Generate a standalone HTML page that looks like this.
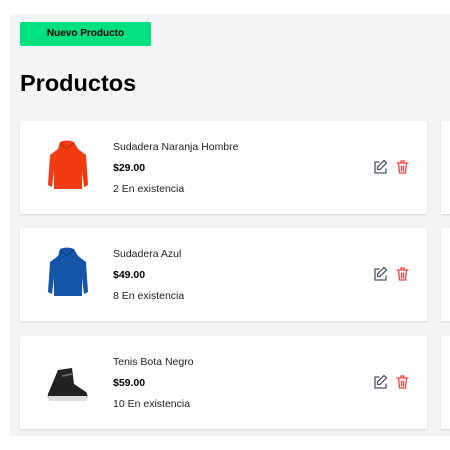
<!DOCTYPE html>
<html><head><style>
body{margin:0;width:450px;height:450px;background:#fff;font-family:"Liberation Sans",sans-serif;position:relative;overflow:hidden}
.bg{position:absolute;left:10px;top:14px;width:440px;height:422px;background:#f3f4f6}
.btn{position:absolute;left:20px;top:22px;width:131px;height:24px;background:#00e07f;border-radius:2px;font-size:10px;font-weight:bold;text-align:center;line-height:24px;color:#000}
h1{position:absolute;left:20px;top:66px;margin:0;font-size:23.5px;font-weight:900;line-height:34px}
.card{position:absolute;left:20px;width:407px;height:93px;background:#fff;box-shadow:0 1px 2px rgba(0,0,0,.12)}
.card2{position:absolute;left:441px;width:20px;height:93px;background:#fff;box-shadow:0 1px 2px rgba(0,0,0,.12)}
.n{position:absolute;left:93px;top:20px;font-size:10.5px;color:#222}
.p{position:absolute;left:93px;top:41px;font-size:10.5px;font-weight:bold}
.s{position:absolute;left:93px;top:62px;font-size:10.5px;color:#222}
.img{position:absolute;left:22px;top:18px}
.ic{position:absolute;left:352px;top:38px}
</style></head><body>
<div class="bg"></div>
<div class="btn">Nuevo Producto</div>
<h1>Productos</h1>

<div class="card" style="top:121px">
<svg class="img" width="50" height="55" viewBox="0 0 50 55"><path d="M18 3 Q25 0 32 3 L36 10 L44 16 L46 46 L42 48 L40 32 L40 50 L12 50 L12 32 L10 48 L6 46 L8 16 L16 10 Z" fill="#f03c10"/><path d="M19 4 Q25 14 31 4" fill="none" stroke="#b82a08"/></svg>
<div class="n">Sudadera Naranja Hombre</div><div class="p">$29.00</div><div class="s">2 En existencia</div>
<svg class="ic" width="40" height="16" viewBox="0 0 40 16"><g fill="none" stroke="#4b5563" stroke-width="1.3" stroke-linecap="round" stroke-linejoin="round"><path d="M7 3H3v11h11v-4"/><path d="M12 1.5l2.5 2.5L8 10.5H5.5V8z"/></g><g fill="none" stroke="#ef4444" stroke-width="1.3" stroke-linecap="round"><path d="M25 4h11M29 4V2h3v2M26.5 4l1 10h6l1-10M29.5 7v5M31.5 7v5"/></g></svg>
</div>
<div class="card2" style="top:121px"></div>

<div class="card" style="top:228px">
<svg class="img" width="50" height="55" viewBox="0 0 50 55"><path d="M18 3 Q25 0 32 3 L36 10 L44 16 L46 46 L42 48 L40 32 L40 50 L12 50 L12 32 L10 48 L6 46 L8 16 L16 10 Z" fill="#1455a8"/><path d="M19 4 Q25 14 31 4" fill="none" stroke="#0c3a78"/></svg>
<div class="n">Sudadera Azul</div><div class="p">$49.00</div><div class="s">8 En existencia</div>
<svg class="ic" width="40" height="16" viewBox="0 0 40 16"><g fill="none" stroke="#4b5563" stroke-width="1.3" stroke-linecap="round" stroke-linejoin="round"><path d="M7 3H3v11h11v-4"/><path d="M12 1.5l2.5 2.5L8 10.5H5.5V8z"/></g><g fill="none" stroke="#ef4444" stroke-width="1.3" stroke-linecap="round"><path d="M25 4h11M29 4V2h3v2M26.5 4l1 10h6l1-10M29.5 7v5M31.5 7v5"/></g></svg>
</div>
<div class="card2" style="top:228px"></div>

<div class="card" style="top:336px">
<svg class="img" width="50" height="55" viewBox="0 0 50 55"><path d="M16 16 L30 14 L32 30 L44 38 Q47 42 44 45 L8 45 Q5 44 6 40 Z" fill="#222"/><path d="M6 42 L45 42 L44 47 L7 47 Z" fill="#ddd"/><path d="M20 22 L30 20" stroke="#666" stroke-width="2"/></svg>
<div class="n">Tenis Bota Negro</div><div class="p">$59.00</div><div class="s">10 En existencia</div>
<svg class="ic" width="40" height="16" viewBox="0 0 40 16"><g fill="none" stroke="#4b5563" stroke-width="1.3" stroke-linecap="round" stroke-linejoin="round"><path d="M7 3H3v11h11v-4"/><path d="M12 1.5l2.5 2.5L8 10.5H5.5V8z"/></g><g fill="none" stroke="#ef4444" stroke-width="1.3" stroke-linecap="round"><path d="M25 4h11M29 4V2h3v2M26.5 4l1 10h6l1-10M29.5 7v5M31.5 7v5"/></g></svg>
</div>
<div class="card2" style="top:336px"></div>
</body></html>
